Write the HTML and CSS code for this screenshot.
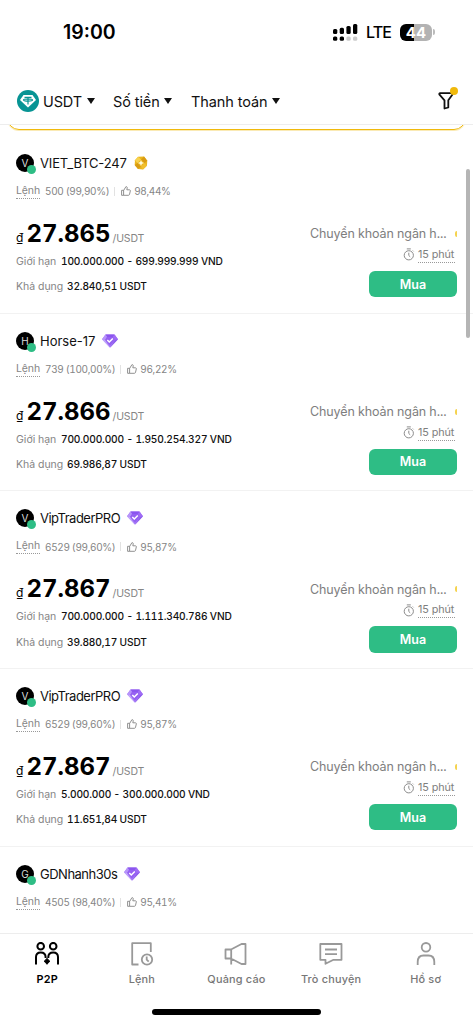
FILE: index.html
```html
<!DOCTYPE html>
<html lang="vi">
<head>
<meta charset="utf-8">
<title>P2P</title>
<link rel="stylesheet" href="styles.css">
</head>
<body>
<svg class="defs" width="0" height="0" aria-hidden="true">
  <symbol id="thumb" viewBox="0 0 10 10"><path d="M.6 4.3h2v5h-2zM2.6 4.5 4.9.7c.9-.2 1.5.4 1.3 1.3L5.8 3.8h2.5c.8 0 1.2.5 1 1.2L8.5 8.400c-.2.6-.5.9-1.100.9H2.600"/></symbol>
  <symbol id="clock" viewBox="0 0 12 13"><circle cx="5.800" cy="7.300" r="4.600"/><path d="M3.800.900h4M5.800 4.700v2.800l1.400 1.300M9.800 2.600l.7.7"/></symbol>
  <symbol id="gem" viewBox="0 0 16 14"><path d="M3.500.5h9L16 5.300 8 13.800 0 5.300z" fill="#a477f6"/><path d="M3.500.5h9L11 3H5z" fill="#8b55ee"/><path d="M0 5.300 3.500.5 5 3 3 6z" fill="#b794fa"/><path d="M16 5.300 12.500.5 11 3l2 3z" fill="#a06cf5"/><path d="M3 6 5 3h6l2 3-5 5.500z" fill="#9560f2"/><path d="M0 5.300 3 6l5 7.800z" fill="#c3a8fb"/><path d="m16 5.300-3 .7-5 7.800z" fill="#8d5cec"/><path d="m5.300 6 2 2 3.500-3.500" fill="none" stroke="#fff" stroke-width="1.500"/></symbol>
  <symbol id="coin" viewBox="0 0 14 14"><path d="m4 .8 6-.2 3.300 4.200-.4 5L9 13.400l-5-.5L.7 9 1 4.200z" fill="#eab51e"/><path d="m4 .8 3 2.700L3.400 7 1 4.200z" fill="#f8d34f"/><path d="m10 .6 3.300 4.200L10.600 7 7 3.500z" fill="#d99b13"/><path d="m3.400 7 3.600 3.700-3 2.200L.7 9z" fill="#d89b12"/><path d="m10.600 7 2.300 2.800L9 13.400l-2-2.700z" fill="#f2bf2d"/><path d="m7 4 .9 2.100L10 7l-2.100.9L7 10l-.9-2.100L4 7l2.100-.9z" fill="#fff9d8"/></symbol>
</svg>
<main class="screen">
  <header class="status">
    <span class="time">19:00</span>
    <svg class="signal" width="25" height="17" viewBox="0 0 25 17"><g><rect x="0" y="5" width="4.300" height="5" rx="1.500"/><rect x="6.700" y="3.800" width="4.300" height="6.200" rx="1.500"/><rect x="13.400" y="2" width="4.300" height="8" rx="1.500"/><rect x="20" y="0" width="4.300" height="10" rx="1.500"/><rect x="0" y="12.500" width="4.300" height="4.200" rx="1.500"/><rect x="6.700" y="12.500" width="4.300" height="4.200" rx="1.500"/></g><g fill="#ccc"><rect x="13.400" y="12.500" width="4.300" height="4.200" rx="1.500"/><rect x="20" y="12.500" width="4.300" height="4.200" rx="1.500"/></g></svg>
    <span class="lte">LTE</span>
    <span class="battery">44</span><i class="battery-tip"></i>
  </header>
  <nav class="filters">
    <button class="filter filter-coin"><svg width="22" height="22" viewBox="0 0 22 22"><circle cx="11" cy="11" r="11" fill="#079494"/><path d="M6.500 5h9l3.500 5-8 7.500L3 10z" fill="#fff"/><path d="M7.500 7.400h7M11 7.400v7M6.500 10c0-1.400 9-1.400 9 0s-9 1.400-9 0" fill="none" stroke="#079494" stroke-width="1.200"/></svg><span>USDT</span><i></i></button>
    <button class="filter filter-amount"><span>Số tiền</span><i></i></button>
    <button class="filter filter-pay"><span>Thanh toán</span><i></i></button>
    <button class="funnel" aria-label="Filter"><svg width="16" height="18" viewBox="0 0 16 18"><path d="M2.200 1.200h11.400c.9 0 1.200.8.700 1.500L10.300 8.300v7.200l-3.800 1V8.300L1.500 2.700c-.5-.7-.2-1.500.7-1.500z"/></svg></button>
  </nav>
  <div class="banner-clip"><div class="banner"></div></div>
  <section class="list">
    <article class="card">
      <div class="name"><span class="avatar">V</span><span class="n1">VIET_BTC-247</span><svg class="coin" width="14" height="14"><use href="#coin"/></svg></div>
      <div class="meta"><u>Lệnh</u><span>500 (99,90%)</span><i></i><svg width="10" height="10"><use href="#thumb"/></svg><span>98,44%</span></div>
      <div class="body">
        <div class="offer"><div class="price"><small>₫</small><b>27.865</b><em>/USDT</em></div><div class="row"><span class="k1">Giới hạn</span><strong>100.000.000 - 699.999.999 VND</strong></div><div class="row"><span class="k2">Khả dụng</span><strong>32.840,51 USDT</strong></div></div>
        <div class="side"><div class="method">Chuyển khoản ngân h...<i></i></div><div class="limit"><svg width="12" height="13"><use href="#clock"/></svg><u>15 phút</u></div><button class="buy">Mua</button></div>
      </div>
    </article>
    <article class="card">
      <div class="name"><span class="avatar">H</span><span class="n2">Horse-17</span><svg class="gem" width="16" height="14"><use href="#gem"/></svg></div>
      <div class="meta"><u>Lệnh</u><span>739 (100,00%)</span><i></i><svg width="10" height="10"><use href="#thumb"/></svg><span>96,22%</span></div>
      <div class="body">
        <div class="offer"><div class="price"><small>₫</small><b>27.866</b><em>/USDT</em></div><div class="row"><span class="k1">Giới hạn</span><strong>700.000.000 - 1.950.254.327 VND</strong></div><div class="row"><span class="k2">Khả dụng</span><strong>69.986,87 USDT</strong></div></div>
        <div class="side"><div class="method">Chuyển khoản ngân h...<i></i></div><div class="limit"><svg width="12" height="13"><use href="#clock"/></svg><u>15 phút</u></div><button class="buy">Mua</button></div>
      </div>
    </article>
    <article class="card">
      <div class="name"><span class="avatar">V</span><span class="n3">VipTraderPRO</span><svg class="gem" width="16" height="14"><use href="#gem"/></svg></div>
      <div class="meta"><u>Lệnh</u><span>6529 (99,60%)</span><i></i><svg width="10" height="10"><use href="#thumb"/></svg><span>95,87%</span></div>
      <div class="body">
        <div class="offer"><div class="price"><small>₫</small><b>27.867</b><em>/USDT</em></div><div class="row"><span class="k1">Giới hạn</span><strong>700.000.000 - 1.111.340.786 VND</strong></div><div class="row"><span class="k2">Khả dụng</span><strong>39.880,17 USDT</strong></div></div>
        <div class="side"><div class="method">Chuyển khoản ngân h...<i></i></div><div class="limit"><svg width="12" height="13"><use href="#clock"/></svg><u>15 phút</u></div><button class="buy">Mua</button></div>
      </div>
    </article>
    <article class="card">
      <div class="name"><span class="avatar">V</span><span class="n3">VipTraderPRO</span><svg class="gem" width="16" height="14"><use href="#gem"/></svg></div>
      <div class="meta"><u>Lệnh</u><span>6529 (99,60%)</span><i></i><svg width="10" height="10"><use href="#thumb"/></svg><span>95,87%</span></div>
      <div class="body">
        <div class="offer"><div class="price"><small>₫</small><b>27.867</b><em>/USDT</em></div><div class="row"><span class="k1">Giới hạn</span><strong>5.000.000 - 300.000.000 VND</strong></div><div class="row"><span class="k2">Khả dụng</span><strong>11.651,84 USDT</strong></div></div>
        <div class="side"><div class="method">Chuyển khoản ngân h...<i></i></div><div class="limit"><svg width="12" height="13"><use href="#clock"/></svg><u>15 phút</u></div><button class="buy">Mua</button></div>
      </div>
    </article>
    <article class="card card-last">
      <div class="name"><span class="avatar">G</span><span class="n4">GDNhanh30s</span><svg class="gem" width="16" height="14"><use href="#gem"/></svg></div>
      <div class="meta"><u>Lệnh</u><span>4505 (98,40%)</span><i></i><svg width="10" height="10"><use href="#thumb"/></svg><span>95,41%</span></div>
    </article>
  </section>
  <nav class="tabs">
    <a class="tab active"><svg width="24" height="24" viewBox="0 0 24 24"><circle cx="5.700" cy="4.200" r="3.300"/><circle cx="18.200" cy="4.200" r="3.300"/><path d="M1 22.500V15c0-3 2-4.600 4.700-4.600s4.900 1.600 4.900 4.600v1M13.300 16v-1c0-3 2.200-4.600 4.900-4.600S23 12 23 15v7.500"/><path d="m12 16.300 1.200 1.500 1.700 1.500-1.700 1.500-1.200 1.500-1.200-1.500-1.700-1.500 1.700-1.500z" fill="#000" stroke-width="1"/></svg><span>P2P</span></a>
    <a class="tab"><svg width="24" height="24" viewBox="0 0 24 24"><path d="M8.500 22.500H2.200V1.200h18.600v8.800"/><circle cx="17" cy="17.500" r="5.200"/><path d="M16.700 14.500v3.200l2 2"/></svg><span>Lệnh</span></a>
    <a class="tab"><svg width="24" height="24" viewBox="0 0 24 24"><path d="M7 7.500 17.500 2h4v20h-4L7 16.500M7.200 7.500v15M7.200 7.500H1.500v9H7"/></svg><span>Quảng cáo</span></a>
    <a class="tab"><svg width="24" height="24" viewBox="0 0 24 24"><path d="M1.300 2h21.200v15.800h-8l-8 4v-4H1.300zM6 7.500h12M6 12.200h12"/></svg><span>Trò chuyện</span></a>
    <a class="tab"><svg width="24" height="24" viewBox="0 0 24 24"><circle cx="12" cy="5.300" r="4.300"/><path d="M3.700 23v-3c0-3.900 2.200-6.500 5.800-6.500h5c3.600 0 5.800 2.600 5.800 6.500v3"/></svg><span>Hồ sơ</span></a>
  </nav>
  <footer class="home"><i></i></footer>
</main>
<div class="scrollbar"></div>
</body>
</html>
```
FILE: styles.css
```css
* { box-sizing: border-box; }
body { margin: 0; background: #fff; color: #111; font-family: Inter, "Noto Sans", sans-serif; }
button { border: 0; padding: 0; background: none; color: inherit; font: inherit; }
svg { flex: none; display: block; }
.defs { position: absolute; }
.screen { width: 473px; height: 1024px; display: flex; flex-direction: column; overflow: hidden; }
.status { height: 78px; flex: none; padding: 0 38px 14px 63px; display: flex; align-items: center; color: #000; }
.time { font-size: 19.500px; font-weight: 600; width: 270px; flex: none; letter-spacing: 0; }
.lte { font-size: 16px; font-weight: 500; margin-left: 8px; width: 25px; flex: none; letter-spacing: -.9px; }
.battery { margin-left: 9px; width: 32px; flex: none; height: 17px; border-radius: 6px; background: linear-gradient(90deg, #000 44%, #b3b3b3 44%); color: #fff; font-size: 15px; font-weight: 700; line-height: 17px; text-align: center; }
.battery-tip { width: 2px; height: 6px; margin-left: 1px; border-radius: 0 2px 2px 0; background: #bbb; }
.filters { height: 47px; flex: none; border-bottom: 1px solid #ededed; padding: 0 19px 0 17px; display: flex; align-items: center; font-size: 14.500px; }
.filter { display: flex; align-items: center; text-align: left; white-space: nowrap; }
.filter i { border: 4.500px solid transparent; border-top: 6px solid #111; border-bottom: 0; margin-left: 5px; }
.filter-coin { width: 96px; }
.filter-coin span { margin-left: 4px; width: 39px; letter-spacing: -.15px; }
.filter-amount { width: 78px; }
.filter-amount span { width: 46px; letter-spacing: -.1px; }
.filter-pay span { width: 76px; letter-spacing: -.1px; }
.filter-pay { flex: 1; }
.funnel { position: relative; }
.funnel svg { fill: none; stroke: #111; stroke-width: 1.800; stroke-linejoin: round; }
.funnel::after { content: ""; position: absolute; width: 8px; height: 8px; border-radius: 50%; background: #f0b90b; right: -4px; top: -5px; }
.banner-clip { height: 11px; flex: none; overflow: hidden; display: flex; align-items: flex-start; }
.banner { width: 459px; height: 24px; margin: -19px 0 0 7px; border: 1px solid #f0b90b; border-radius: 12px; box-shadow: 0 1px 0 #f0b90b4d; }
.list { flex: none; height: 797px; overflow: hidden; }
.card { height: 177.660px; padding: 18px 16px 0; border-bottom: 1px solid #f2f2f2; font-variant-numeric: tabular-nums; }
.card-last { border: 0; }
.name { height: 18px; display: flex; align-items: center; font-size: 13px; font-variant-numeric: normal; white-space: nowrap; }
.n1 { width: 87px; letter-spacing: -.15px; }
.n2 { width: 55px; letter-spacing: 0; }
.n3 { width: 80px; letter-spacing: -.5px; }
.n4 { width: 77px; letter-spacing: -.5px; }
.avatar { position: relative; width: 18px; height: 18px; border-radius: 50%; background: #000; color: #ddd; font-size: 10px; line-height: 18px; text-align: center; margin-right: 6px; flex: none; }
.avatar::after { content: ""; position: absolute; width: 9px; height: 9px; border-radius: 50%; background: #2ebd85; right: -2px; bottom: -2px; }
.coin { margin-left: 7px; }
.gem { margin-left: 7px; }
.meta { height: 14px; margin-top: 12.400px; display: flex; align-items: center; color: #858585; font-size: 10px; letter-spacing: -.35px; white-space: nowrap; }
.meta u { text-decoration: none; border-bottom: 1px dotted #999; width: 24px; line-height: 14px; margin-right: 5px; font-size: 10.500px; letter-spacing: -.1px; }
.meta i { width: 1px; height: 9px; background: #e2e2e2; margin: 0 6px 0 5px; }
.meta svg { fill: none; stroke: #858585; stroke-width: .9; stroke-linejoin: round; margin-right: 3px; }
.body { display: flex; justify-content: space-between; margin-top: 20.600px; }
.price { height: 30px; display: flex; align-items: baseline; line-height: 30px; color: #000; }
.price small { font-size: 12px; width: 10.500px; }
.price b { font-size: 24px; font-weight: 700; width: 86px; }
.price em { font-size: 10.500px; font-style: normal; letter-spacing: -.15px; color: #858585; }
.row { height: 14px; margin-top: 5px; display: flex; align-items: baseline; font-size: 10.200px; line-height: 15px; white-space: nowrap; }
.row + .row { margin-top: 11.400px; }
.row span { color: #858585; font-size: 10.500px; }
.row strong { font-weight: 500; letter-spacing: -.18px; }
.k1 { width: 45px; }
.k2 { width: 51px; }
.side { width: 150px; padding-top: 6px; display: flex; flex-direction: column; align-items: flex-end; color: #7e7e7e; }
.method { height: 18px; width: 147px; display: flex; align-items: center; justify-content: space-between; font-size: 12.500px; letter-spacing: -.1px; white-space: nowrap; }
.method i { width: 2px; height: 6px; border-radius: 2px 0 0 2px; background: #f5d34f; }
.limit { height: 16px; margin-top: 4px; display: flex; align-items: center; font-size: 10.800px; font-variant-numeric: normal; letter-spacing: -.1px; padding-right: 2px; }
.limit svg { fill: none; stroke: #8c8c8c; stroke-width: 1; margin-right: 3px; }
.limit u { text-decoration: none; border-bottom: 1px dotted #999; line-height: 15px; width: 37px; white-space: nowrap; }
.buy { width: 88px; height: 26.500px; margin-top: 8px; border-radius: 6px; background: #2ebd85; color: #fff; font-size: 12.500px; font-weight: 600; }
.tabs { height: 62px; flex: none; border-top: 1px solid #ededed; padding-top: 8px; display: grid; grid-template-columns: repeat(5, 94.600px); }
.tab { display: flex; flex-direction: column; align-items: center; color: #777; font-size: 10.900px; font-weight: 500; line-height: 14px; gap: 5.500px; letter-spacing: .2px; }
.tab svg { fill: none; stroke: #999; stroke-width: 1.800; stroke-linejoin: round; }
.active { color: #000; font-weight: 600; }
.active svg { stroke: #000; stroke-width: 2; }
.home { flex: 1; display: flex; justify-content: center; align-items: flex-start; padding-top: 14px; }
.home i { width: 169px; height: 6px; border-radius: 3px; background: #000; }
.scrollbar { position: absolute; left: 466px; top: 169px; width: 4px; height: 169px; border-radius: 2px; background: #b5b5b5; }
```
